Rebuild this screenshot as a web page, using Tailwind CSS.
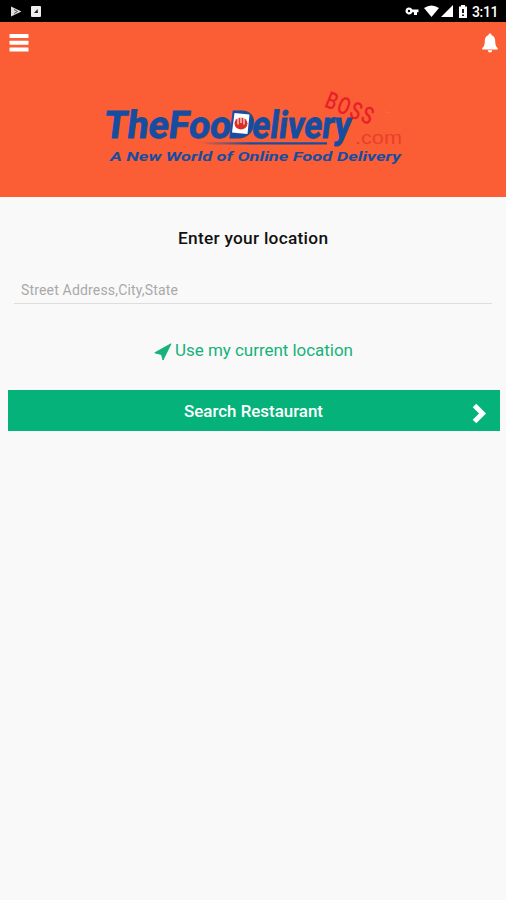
<!DOCTYPE html>
<html lang="en">
<head>
<meta charset="utf-8">
<title>The Food Delivery Boss</title>
<script src="https://cdn.jsdelivr.net/npm/@tailwindcss/browser@4"></script>
</head>
<body class="min-h-screen bg-[#f9f9f9] font-[Roboto,sans-serif]">
<div class="flex h-[22px] items-center justify-between bg-black pl-[10px] pr-[7px] text-white">
  <div class="flex items-center gap-[9px]">
    <svg class="h-[11px] w-[12px]" viewBox="0 0 12 11"><path d="M1 .5 11.5 5.5 1 10.5Z" fill="#ddd"/><path d="M4 3.500 7.500 5.5 4 7.500" fill="none" stroke="#555"/></svg>
    <svg class="h-[11px] w-[10px]" viewBox="0 0 10 11"><rect width="10" height="11" rx="1" fill="#eee"/><path d="M6.500 3 7 7H3Z" fill="#222"/></svg>
  </div>
  <div class="flex items-center">
    <svg class="mr-[5px] h-[8px] w-[14px]" viewBox="0 0 14 8" fill="#fff"><path fill-rule="evenodd" d="M4 .5a3.5 3.5 0 1 0 3.3 4.7H9V8h3V5.2h1.5V2.5H7.3A3.5 3.5 0 0 0 4 .5Zm0 2.3a1.2 1.2 0 1 1 0 2.4 1.2 1.2 0 0 1 0-2.4Z"/></svg>
    <svg class="mr-[2px] h-[12px] w-[15px]" viewBox="0 0 15 12"><path d="M0 3Q7.500-2 15 3L7.500 12Z" fill="#fff"/></svg>
    <svg class="mr-[6px] h-[12px] w-[12px]" viewBox="0 0 12 12"><path d="M12 0V12H0Z" fill="#fff"/></svg>
    <svg class="mr-[5px] h-[13px] w-[8px]" viewBox="0 0 8 13"><path d="M2 0H6V1.500H8V13H0V1.500H2Z" fill="#fff"/><path d="M3 4H5V8H3ZM3 9.500H5V11H3Z" fill="#222"/></svg>
    <svg class="h-[16px] w-[27px]" viewBox="0 0 27 16"><text x="0" y="13.500" font-size="14" font-weight="500" fill="#fff" textLength="26.500">3:11</text></svg>
  </div>
</div>
<header class="h-[175px] bg-[#fb5e34]">
  <div class="flex h-[42px] items-center justify-between pl-[9px] pr-[8px]">
    <svg class="h-[18px] w-[20px]" viewBox="0 0 20 18" fill="#fff"><rect x=".5" y="0" width="19" height="4" rx=".5"/><rect x=".5" y="6.700" width="19" height="4" rx=".5"/><rect x=".5" y="13.400" width="19" height="4" rx=".5"/></svg>
    <svg class="h-[20px] w-[16px]" viewBox="0 0 16 20" fill="#fff"><path d="M8 .5c1 0 1.500.7 1.500 1.700C12.300 3 13.200 5.300 13.200 8c0 4 .8 5.800 2.600 7.300V16.500H.2V15.300C2 13.800 2.800 12 2.800 8c0-2.700.9-5 3.700-5.800C6.500 1.200 7 .5 8 .5ZM5.800 17.300h4.400a2.200 2.200 0 0 1-4.400 0Z"/></svg>
  </div>
  <svg class="mx-auto mt-[16px] block h-[90px] w-[310px]" viewBox="98 80 310 90">
    <defs><linearGradient id="line"><stop offset="0" stop-color="#174da0" stop-opacity="0"/><stop offset=".4" stop-color="#174da0"/></linearGradient></defs>
    <g fill="#174da0" font-family="Roboto, sans-serif" font-weight="700">
      <g stroke="#174da0" stroke-width=".9" transform="translate(0 138) skewX(-7)">
        <text x="103" y="0" font-size="38" textLength="127" lengthAdjust="spacingAndGlyphs">TheFoo</text>
        <text x="227" y="0" font-size="38" textLength="26" lengthAdjust="spacingAndGlyphs">D</text>
        <text x="251" y="0" font-size="38" textLength="99" lengthAdjust="spacingAndGlyphs">elivery</text>
      </g>
      <text x="110" y="160.500" font-size="13" font-style="italic" textLength="291" lengthAdjust="spacingAndGlyphs">A New World of Online Food Delivery</text>
    </g>
    <path d="M234.500 113 249.500 114.500 247.500 134 232 132.500Z" fill="#fff"/>
    <ellipse cx="241" cy="123.500" rx="6.500" ry="6" fill="#dc2e25"/>
    <path d="M238 116.500v8M241 116v7M244 116.500v8" stroke="#fff" stroke-width="1.100"/>
    <path d="M198 142.300H327V144.500H210Z" fill="url(#line)"/>
    <text transform="translate(323.500 106.500) rotate(22)" fill="#e8202b" font-family="Roboto, sans-serif" font-size="24" font-weight="500" textLength="51" lengthAdjust="spacingAndGlyphs" letter-spacing="2">BOSS</text>
    <text x="355" y="144" fill="#e8402c" font-family="Liberation Sans, sans-serif" font-size="17.500" textLength="47" lengthAdjust="spacingAndGlyphs">.com</text>
    <path d="M383 111.500l7 1.500" stroke="#ef7048" stroke-width="1"/>
  </svg>
</header>
<main>
  <h1 class="pt-[28px] text-center"><svg class="mx-auto block h-[26px] w-[154px]" viewBox="0 0 154 26"><text x="2" y="18.500" font-size="17.300" font-weight="500" fill="#111" textLength="150">Enter your location</text></svg></h1>
  <div class="mx-[14px] mt-[25px] flex h-[28px] items-center border-b border-[#dedede] pl-[7px]">
    <svg class="h-[24px] w-[162px]" viewBox="0 0 162 24"><text x="0" y="17" font-size="14" fill="#a9a9a9" textLength="157">Street Address,City,State</text></svg>
  </div>
  <div class="mt-[33px] flex h-[26px] items-center pl-[154px] text-[#16b27b]">
    <svg class="mt-[3px] h-[18px] w-[18px]" viewBox="0 0 18 18" fill="currentColor" stroke="currentColor" stroke-linejoin="round"><path d="M17 .8 9 17 7.500 11.500.8 9.800Z"/></svg>
    <svg class="ml-[3px] h-[26px] w-[180px]" viewBox="0 0 180 26"><text x="0" y="18.500" font-size="17" fill="currentColor" textLength="178">Use my current location</text></svg>
  </div>
  <button class="ml-[8px] mt-[27px] flex h-[41px] w-[492px] items-center justify-between bg-[#04b27a] pl-[176px] pr-[13px] text-white">
    <svg class="h-[26px] w-[142px]" viewBox="0 0 142 26"><text x="0" y="18.500" font-size="17" font-weight="500" fill="currentColor" textLength="139" lengthAdjust="spacingAndGlyphs">Search Restaurant</text></svg>
    <svg class="mt-[5px] h-[21px] w-[15px]" viewBox="0 0 15 21"><path d="M2.500 2.500 10.500 10.500 2.500 18.500" fill="none" stroke="currentColor" stroke-width="5"/></svg>
  </button>
</main>
</body>
</html>
